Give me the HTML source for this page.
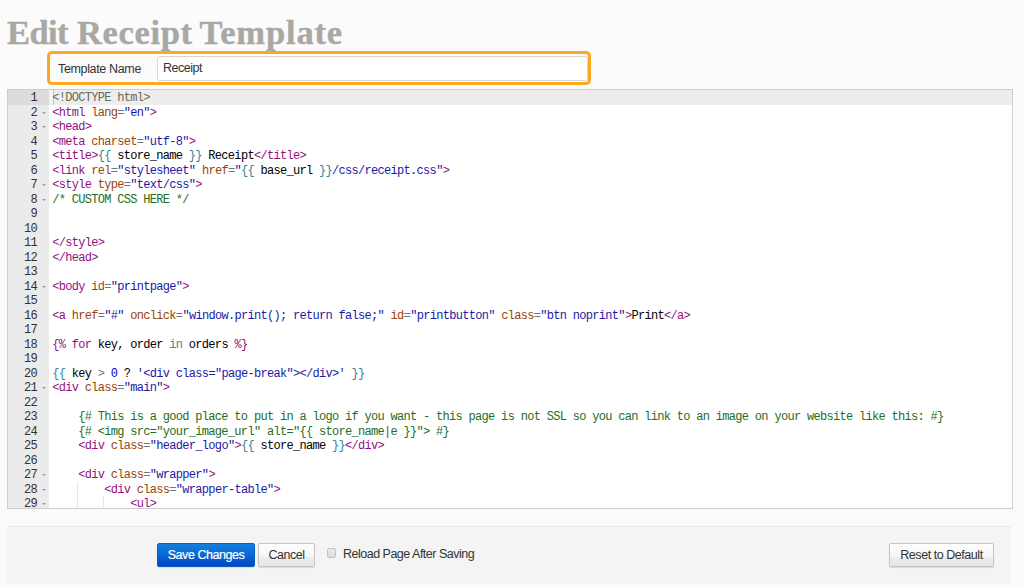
<!DOCTYPE html>
<html><head><meta charset="utf-8">
<style>
html,body{margin:0;padding:0;}
body{width:1024px;height:587px;overflow:hidden;background:#fbfbfb;position:relative;font-family:"Liberation Sans",sans-serif;}
#title{position:absolute;left:7px;top:11.5px;font-family:"Liberation Serif",serif;font-weight:bold;font-size:34.5px;color:#a9a8a4;letter-spacing:0.3px;-webkit-text-stroke:0.4px #a9a8a4;white-space:nowrap;line-height:40px;}
#title span{position:absolute;top:0;}
#namebox{position:absolute;left:47px;top:51px;width:538px;height:28px;border:3px solid #fba922;border-radius:5px;background:#fbfbfb;}
#namebox .lbl{position:absolute;left:8px;top:7.5px;font-size:12.5px;letter-spacing:-0.35px;color:#333;}
#namebox .inp{position:absolute;left:107px;top:1.5px;width:429px;height:23px;border:1px solid #d6d6d6;border-radius:3px;background:#fff;}
#namebox .inp span{position:absolute;left:5px;top:4.5px;font-size:12.5px;letter-spacing:-0.5px;color:#333;}
#editor{position:absolute;left:7px;top:89px;width:1004px;height:418px;border:1px solid #cdcdcd;background:#fff;overflow:hidden;}
#gutter{position:absolute;left:0;top:0;width:41px;height:100%;background:#ebebeb;}
.ln{position:absolute;left:0;width:41px;height:14.5px;font-family:"Liberation Mono",monospace;font-size:12px;letter-spacing:-0.695px;line-height:14.5px;color:#333;}
.ln b{top:1px;}
.ln b{position:absolute;right:12px;font-weight:normal;}
.ln i{position:absolute;left:34px;top:7px;width:0;height:0;border-left:2px solid transparent;border-right:2px solid transparent;border-top:2px solid #999;}
#code{position:absolute;left:44.2px;top:1px;right:0;font-family:"Liberation Mono",monospace;font-size:12px;letter-spacing:-0.695px;line-height:14.5px;color:#000;white-space:pre;}
.row{height:14.5px;}
.ig{position:absolute;width:1px;background:#e6e6e6;}
#cursor{position:absolute;left:44.2px;top:0;width:2.2px;height:15px;background:#c2c2c2;}
.act1{background:#dcdcdc;}
.act{position:absolute;left:41px;top:0;width:100%;height:14.5px;background:#ededed;}
.t{color:rgb(147,15,128);} .a{color:#994409;} .s{color:#1a1aa6;} .o{color:rgb(104,118,135);} .c{color:#236e24;} .v{color:rgb(49,132,149);} .n{color:rgb(0,0,205);} .p{color:rgb(104,104,91);}
#footer{position:absolute;left:7px;top:526px;width:1004px;height:57px;background:#f4f4f4;border-top:1px solid #eaeaea;}
.btn{position:absolute;top:16px;height:24px;border:1px solid #c5c5c5;border-radius:2px;background:linear-gradient(#fdfdfd 0%,#f7f7f7 55%,#ececec 62%,#e6e6e6 100%);font-size:12.5px;letter-spacing:-0.45px;color:#333;text-align:center;line-height:22.5px;box-sizing:border-box;box-shadow:0 1px 1px rgba(0,0,0,0.1);}
#save{left:150px;width:98px;border-color:#0a5fc5;background:linear-gradient(#127fdc,#0a6ad6 45%,#0046c0);color:#fff;-webkit-text-stroke:0.2px #fff;}
#cancel{left:251px;width:57px;}
#reset{left:882px;width:105px;}
#chk{position:absolute;left:320px;top:21px;width:7px;height:7.5px;border:1px solid #c4c4c4;border-radius:2px;background:linear-gradient(#ececec,#dcdcdc);}
#reload{position:absolute;left:336px;top:19.5px;font-size:12.5px;letter-spacing:-0.5px;color:#333;}
</style></head><body>
<div id="title"><span style="left:0;letter-spacing:-0.6px">Edit</span><span style="left:70px;letter-spacing:0.65px">Receipt</span><span style="left:192.5px;letter-spacing:0.85px">Template</span></div>
<div id="namebox"><div class="lbl">Template Name</div><div class="inp"><span>Receipt</span></div></div>
<div id="editor">
<div id="gutter">
<div class="ln act1" style="top:0.0px"><b>1</b></div>
<div class="ln" style="top:14.5px"><b>2</b><i></i></div>
<div class="ln" style="top:29.0px"><b>3</b><i></i></div>
<div class="ln" style="top:43.5px"><b>4</b></div>
<div class="ln" style="top:58.0px"><b>5</b></div>
<div class="ln" style="top:72.5px"><b>6</b></div>
<div class="ln" style="top:87.0px"><b>7</b><i></i></div>
<div class="ln" style="top:101.5px"><b>8</b><i></i></div>
<div class="ln" style="top:116.0px"><b>9</b></div>
<div class="ln" style="top:130.5px"><b>10</b></div>
<div class="ln" style="top:145.0px"><b>11</b></div>
<div class="ln" style="top:159.5px"><b>12</b></div>
<div class="ln" style="top:174.0px"><b>13</b></div>
<div class="ln" style="top:188.5px"><b>14</b><i></i></div>
<div class="ln" style="top:203.0px"><b>15</b></div>
<div class="ln" style="top:217.5px"><b>16</b></div>
<div class="ln" style="top:232.0px"><b>17</b></div>
<div class="ln" style="top:246.5px"><b>18</b></div>
<div class="ln" style="top:261.0px"><b>19</b></div>
<div class="ln" style="top:275.5px"><b>20</b></div>
<div class="ln" style="top:290.0px"><b>21</b><i></i></div>
<div class="ln" style="top:304.5px"><b>22</b></div>
<div class="ln" style="top:319.0px"><b>23</b></div>
<div class="ln" style="top:333.5px"><b>24</b></div>
<div class="ln" style="top:348.0px"><b>25</b></div>
<div class="ln" style="top:362.5px"><b>26</b></div>
<div class="ln" style="top:377.0px"><b>27</b><i></i></div>
<div class="ln" style="top:391.5px"><b>28</b><i></i></div>
<div class="ln" style="top:406.0px"><b>29</b><i></i></div>
</div>
<div class="act"></div>
<div class="ig" style="left:69px;top:391.5px;height:30px"></div><div class="ig" style="left:94.5px;top:406px;height:15px"></div><div id="cursor"></div><div style="position:absolute;left:41px;top:0;width:3.5px;height:14.5px;background:#f3f3f3"></div>
<div id="code"><div class="row"><span class="p">&lt;!DOCTYPE html&gt;</span></div><div class="row"><span class="t">&lt;html</span> <span class="a">lang</span><span class="o">=</span><span class="s">"en"</span><span class="t">&gt;</span></div><div class="row"><span class="t">&lt;head&gt;</span></div><div class="row"><span class="t">&lt;meta</span> <span class="a">charset</span><span class="o">=</span><span class="s">"utf-8"</span><span class="t">&gt;</span></div><div class="row"><span class="t">&lt;title&gt;</span><span class="v">{{</span> store_name <span class="v">}}</span> Receipt<span class="t">&lt;/title&gt;</span></div><div class="row"><span class="t">&lt;link</span> <span class="a">rel</span><span class="o">=</span><span class="s">"stylesheet"</span> <span class="a">href</span><span class="o">=</span><span class="s">"</span><span class="v">{{</span> base_url <span class="v">}}</span><span class="s">/css/receipt.css"</span><span class="t">&gt;</span></div><div class="row"><span class="t">&lt;style</span> <span class="a">type</span><span class="o">=</span><span class="s">"text/css"</span><span class="t">&gt;</span></div><div class="row"><span class="c">/* CUSTOM CSS HERE */</span></div><div class="row"></div><div class="row"></div><div class="row"><span class="t">&lt;/style&gt;</span></div><div class="row"><span class="t">&lt;/head&gt;</span></div><div class="row"></div><div class="row"><span class="t">&lt;body</span> <span class="a">id</span><span class="o">=</span><span class="s">"printpage"</span><span class="t">&gt;</span></div><div class="row"></div><div class="row"><span class="t">&lt;a</span> <span class="a">href</span><span class="o">=</span><span class="s">"#"</span> <span class="a">onclick</span><span class="o">=</span><span class="s">"window.print(); return false;"</span> <span class="a">id</span><span class="o">=</span><span class="s">"printbutton"</span> <span class="a">class</span><span class="o">=</span><span class="s">"btn noprint"</span><span class="t">&gt;</span>Print<span class="t">&lt;/a&gt;</span></div><div class="row"></div><div class="row"><span class="t">{%</span> <span class="t">for</span> key, order <span class="o">in</span> orders <span class="t">%}</span></div><div class="row"></div><div class="row"><span class="v">{{</span> key <span class="o">&gt;</span> <span class="n">0</span> ? <span class="s">'&lt;div class="page-break"&gt;&lt;/div&gt;'</span> <span class="v">}}</span></div><div class="row"><span class="t">&lt;div</span> <span class="a">class</span><span class="o">=</span><span class="s">"main"</span><span class="t">&gt;</span></div><div class="row"></div><div class="row">    <span class="c">{# This is a good place to put in a logo if you want - this page is not SSL so you can link to an image on your website like this: #}</span></div><div class="row">    <span class="c">{# &lt;img src="your_image_url" alt="{{ store_name|e }}"&gt; #}</span></div><div class="row">    <span class="t">&lt;div</span> <span class="a">class</span><span class="o">=</span><span class="s">"header_logo"</span><span class="t">&gt;</span><span class="v">{{</span> store_name <span class="v">}}</span><span class="t">&lt;/div&gt;</span></div><div class="row"></div><div class="row">    <span class="t">&lt;div</span> <span class="a">class</span><span class="o">=</span><span class="s">"wrapper"</span><span class="t">&gt;</span></div><div class="row">        <span class="t">&lt;div</span> <span class="a">class</span><span class="o">=</span><span class="s">"wrapper-table"</span><span class="t">&gt;</span></div><div class="row">            <span class="t">&lt;ul&gt;</span></div></div>
</div>
<div id="footer">
<div class="btn" id="save">Save Changes</div>
<div class="btn" id="cancel">Cancel</div>
<div id="chk"></div>
<div id="reload">Reload Page After Saving</div>
<div class="btn" id="reset">Reset to Default</div>
</div>
</body></html>
